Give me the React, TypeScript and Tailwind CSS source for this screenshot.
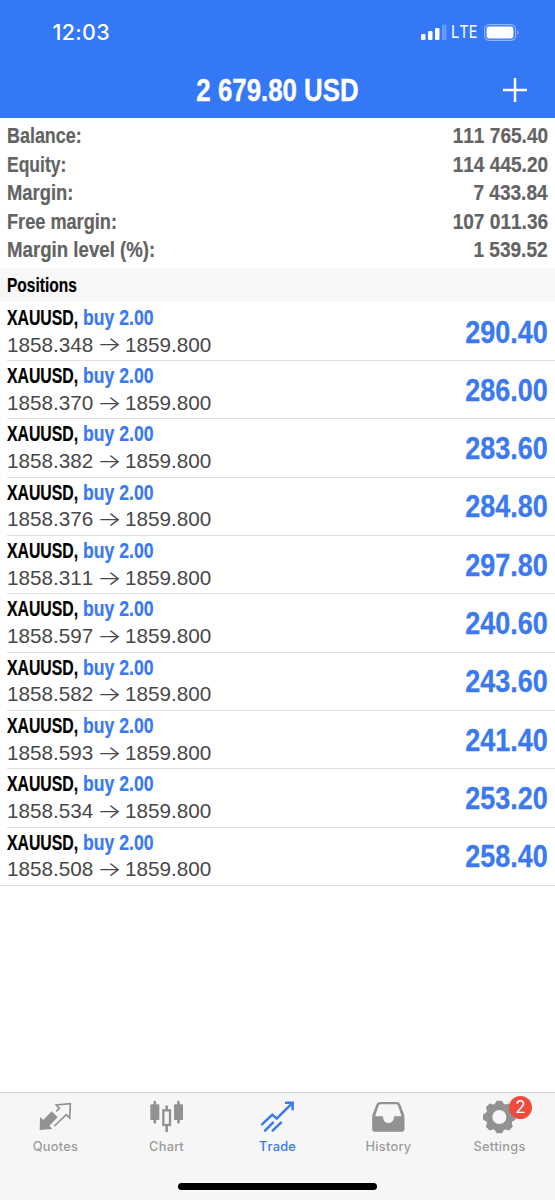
import type { ReactNode } from "react";

const account = [
  { label: "Balance:", value: "111 765.40", scale: "scale-x-[0.815]" },
  { label: "Equity:", value: "114 445.20", scale: "scale-x-[0.795]" },
  { label: "Margin:", value: "7 433.84", scale: "scale-x-[0.835]" },
  { label: "Free margin:", value: "107 011.36", scale: "scale-x-[0.825]" },
  { label: "Margin level (%):", value: "1 539.52", scale: "scale-x-[0.848]" },
];

const positions = [
  { open: "1858.348", profit: "290.40" },
  { open: "1858.370", profit: "286.00" },
  { open: "1858.382", profit: "283.60" },
  { open: "1858.376", profit: "284.80" },
  { open: "1858.311", profit: "297.80" },
  { open: "1858.597", profit: "240.60" },
  { open: "1858.582", profit: "243.60" },
  { open: "1858.593", profit: "241.40" },
  { open: "1858.534", profit: "253.20" },
  { open: "1858.508", profit: "258.40" },
];

function QuotesIcon() {
  return (
    <svg viewBox="113 45 108 102" className="h-[34px] w-9">
      <path d="M118 135L119 96L129 105L154 79L172 97L147 122L156 132Z" fill="currentColor" />
      <path d="M168 79L177 70L168 60L210 56L208 99L198 89L162 123" fill="none" stroke="currentColor" strokeWidth="5" />
    </svg>
  );
}

function ChartIcon() {
  return (
    <svg viewBox="446 45 108 102" className="h-[34px] w-9" fill="none" stroke="currentColor">
      <path d="M463.500 51V112M534.500 51V112M499 65V74M499 122V138" strokeWidth="8" strokeLinecap="round" />
      <rect x="450" y="58" width="27" height="47" rx="3" fill="currentColor" stroke="none" />
      <rect x="521" y="58" width="27" height="47" rx="3" fill="currentColor" stroke="none" />
      <rect x="489" y="76" width="20" height="44" strokeWidth="7" />
    </svg>
  );
}

function TradeIcon() {
  return (
    <svg viewBox="119 45 108 102" className="h-[34px] w-9" fill="none" stroke="currentColor" strokeWidth="7.500">
      <path d="M125 118L156 89L169 101L215 55M134 137L158 113M157 137L182 113" strokeLinecap="round" strokeLinejoin="round" />
      <path d="M194 53H217V76" />
    </svg>
  );
}

function HistoryIcon() {
  return (
    <svg viewBox="91.500 45 108 102" className="h-[34px] w-9">
      <path
        fillRule="evenodd"
        fill="currentColor"
        d="M119 51H169Q176 51 179 58L190 86Q192 91 192 98V132Q192 140 184 140H103Q95 140 95 132V98Q95 91 97 86L108 58Q111 51 118 51ZM120 58Q116 58 114 62L104 94H126Q128 94 128 98A16 16 0 0 0 160 98Q160 94 162 94H183L173 62Q171 58 167 58Z"
      />
    </svg>
  );
}

function SettingsIcon() {
  return (
    <svg viewBox="425 45 108 102" className="h-[34px] w-9">
      <circle cx="477" cy="96" r="31" fill="none" stroke="currentColor" strokeWidth="20" />
      {[0, 45, 90, 135, 180, 225, 270, 315].map((angle) => (
        <path
          key={angle}
          d="M462 60L467 50Q468 47 471 47H483Q486 47 487 50L492 60Z"
          fill="currentColor"
          transform={`rotate(${angle} 477 96)`}
        />
      ))}
    </svg>
  );
}

function Tab({ label, active, badge, children }: { label: string; active?: boolean; badge?: string; children: ReactNode }) {
  return (
    <div className={`flex flex-col items-center pt-[7px] ${active ? "text-[#3b79ee]" : "text-[#929292]"}`}>
      <div className="relative">
        {children}
        {badge && (
          <span className="absolute -top-[4px] left-[27.500px] flex size-[23px] items-center justify-center rounded-full bg-[#ee4b3c] pt-[2px] font-['Inter'] text-[17px] text-white">
            {badge}
          </span>
        )}
      </div>
      <span className={`mt-[4px] font-['Inter'] text-[12.800px] leading-[18px] font-medium tracking-[0.250px] ${active ? "" : "text-[#9c9c9c]"}`}>
        {label}
      </span>
    </div>
  );
}

export default function App() {
  return (
    <div className="flex h-[1200px] w-[555px] flex-col overflow-hidden bg-white font-['Liberation_Sans',sans-serif] [font-kerning:none]">
      <header className="h-[118px] shrink-0 bg-[#3478f6] text-white">
        <div className="flex h-16 items-center justify-between pr-[35px] pl-[52.500px] font-['Inter',sans-serif]">
          <span className="text-[21.500px] font-medium tracking-[0.300px]">12:03</span>
          <div className="flex items-center">
            <svg viewBox="0 0 26 17" className="h-[17px] w-[26px]" fill="currentColor">
              <rect x="0" y="10" width="4.500" height="6" rx="1.200" />
              <rect x="7" y="7" width="4.500" height="9" rx="1.200" />
              <rect x="14" y="4" width="4.500" height="12" rx="1.200" />
              <rect x="21" y="0.500" width="4.500" height="15.500" rx="1.200" opacity="0.250" />
            </svg>
            <span className="ml-[4px] w-[28px] origin-left scale-x-[0.840] text-[17.500px]">LTE</span>
            <svg viewBox="0 0 36 17" className="ml-[5px] h-[17px] w-9">
              <rect x="0.600" y="0.600" width="31" height="15.800" rx="4.800" fill="none" stroke="white" strokeWidth="1.100" opacity="0.450" />
              <rect x="2.500" y="2.600" width="27" height="11.800" rx="3" fill="white" />
              <path d="M33.500 6Q36 8.500 33.500 11Z" fill="white" opacity="0.500" />
            </svg>
          </div>
        </div>
        <div className="grid h-[52px] grid-cols-[40px_1fr_40px] items-center px-[21px]">
          <span />
          <h1 className="scale-x-[0.82] pt-[2px] text-center text-[31.500px] font-bold whitespace-nowrap [-webkit-text-stroke:0.4px]">2 679.80 USD</h1>
          <svg viewBox="0 0 24 24" className="ml-[9px] size-6" stroke="currentColor" strokeWidth="2.500">
            <path d="M0 12H24M12 0V24" />
          </svg>
        </div>
      </header>

      <dl className="h-[150px] shrink-0 px-[7px] pt-[4px] text-[22px] leading-[28.500px] font-bold text-[#636363] [-webkit-text-stroke:0.2px]">
        {account.map((row) => (
          <div key={row.label} className="flex justify-between">
            <dt className={`origin-left ${row.scale}`}>{row.label}</dt>
            <dd className="origin-right scale-x-[0.867]">{row.value}</dd>
          </div>
        ))}
      </dl>

      <h2 className="flex h-[34px] shrink-0 items-center bg-[#f7f7f7] px-[6.500px] pt-[2px] text-[19.500px] font-bold text-black [-webkit-text-stroke:0.2px]">
        <span className="origin-left scale-x-[0.795]">Positions</span>
      </h2>

      <ul className="flex-1 pt-[0.600px]">
        {positions.map((position) => (
          <li key={position.open} className="group h-[58.340px] pl-[7px] last:pl-0">
            <div className="flex h-full items-center justify-between border-b border-[#e0e0e2] pr-[7px] group-last:pl-[7px]">
              <div className="pb-[1px]">
                <div className="flex h-[27px] items-center text-[21.500px] font-bold [-webkit-text-stroke:0.2px]">
                  <span className="w-[76px]">
                    <span className="inline-block origin-left scale-x-[0.735] text-black">XAUUSD,</span>
                  </span>
                  <span className="origin-left scale-x-[0.820] text-[#3b79ee]">buy 2.00</span>
                </div>
                <div className="flex h-[26px] items-center text-[21px] text-[#48484a]">
                  <span className="w-[90px] origin-left scale-x-[0.985]">{position.open}</span>
                  <span className="w-[28px] origin-left scale-x-[1.300] font-['Inter'] text-[20px] font-light">→</span>
                  <span className="origin-left scale-x-[0.985]">1859.800</span>
                </div>
              </div>
              <span className="origin-right scale-x-[0.870] pt-[3px] text-[31px] font-bold text-[#3b79ee] [-webkit-text-stroke:0.3px]">{position.profit}</span>
            </div>
          </li>
        ))}
      </ul>

      <nav className="flex h-[108.500px] shrink-0 flex-col border-t border-[#d4d4d4] bg-[#f6f6f6]">
        <div className="grid grid-cols-5">
          <Tab label="Quotes">
            <QuotesIcon />
          </Tab>
          <Tab label="Chart">
            <ChartIcon />
          </Tab>
          <Tab label="Trade" active>
            <TradeIcon />
          </Tab>
          <Tab label="History">
            <HistoryIcon />
          </Tab>
          <Tab label="Settings" badge="2">
            <SettingsIcon />
          </Tab>
        </div>
        <div className="mx-auto mt-auto mb-[10px] h-[7px] w-[199px] rounded-full bg-black" />
      </nav>
    </div>
  );
}
